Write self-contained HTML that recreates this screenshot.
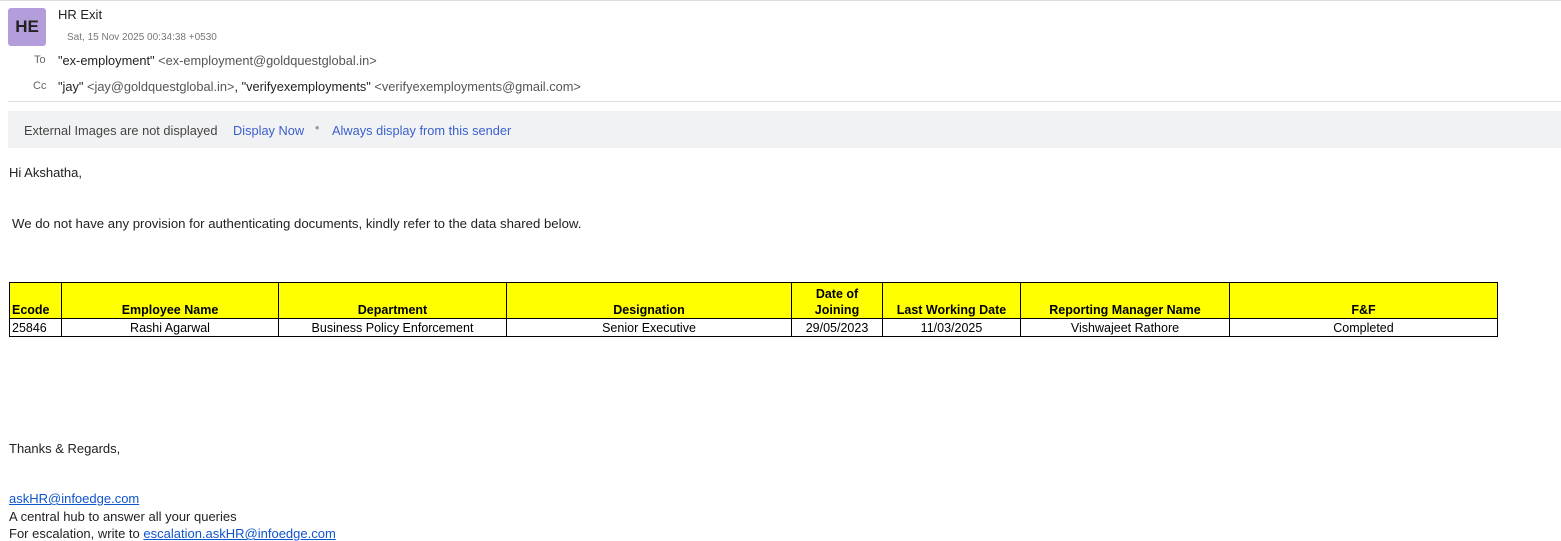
<!DOCTYPE html>
<html><head><meta charset="utf-8"><style>
body{margin:0;width:1561px;height:541px;background:#fff;font-family:"Liberation Sans",sans-serif;position:relative;overflow:hidden;color:#222}
.a{position:absolute;white-space:nowrap}
.g{color:#555}
a{color:#1155cc;text-decoration:underline}
table{position:absolute;left:9px;top:282px;border-collapse:collapse;font-size:12.5px;font-family:"Liberation Sans Narrow","Liberation Sans",sans-serif;color:#000}
td{border:1px solid #000;text-align:center;padding:0 2px;line-height:16px}
tr.h td{background:#ffff00;font-weight:bold;height:35px;vertical-align:bottom}
tr.r td{height:17px}
</style></head><body>
<div style="position:absolute;left:0;top:0;width:1561px;height:1px;background:#ddd"></div>
<div class="a" style="left:8px;top:8px;width:38px;height:38px;background:#b39ddb;border-radius:3px;font-size:17px;font-weight:bold;line-height:38px;text-align:center;color:#222">HE</div>
<div class="a" style="left:58px;top:7px;font-size:13px;color:#222">HR Exit</div>
<div class="a" style="left:67px;top:32px;font-size:10px;color:#777">Sat, 15 Nov 2025 00:34:38 +0530</div>
<div class="a" style="left:34px;top:54px;font-size:11px;color:#666">To</div>
<div class="a" style="left:58px;top:53px;font-size:12.8px;color:#222">"ex-employment" <span class="g">&lt;ex-employment@goldquestglobal.in&gt;</span></div>
<div class="a" style="left:33px;top:80px;font-size:11px;color:#666">Cc</div>
<div class="a" style="left:58px;top:79px;font-size:12.8px;color:#222">"jay" <span class="g">&lt;jay@goldquestglobal.in&gt;</span>, "verifyexemployments" <span class="g">&lt;verifyexemployments@gmail.com&gt;</span></div>
<div style="position:absolute;left:8px;top:101px;width:1553px;height:1px;background:#ddd"></div>
<div style="position:absolute;left:8px;top:111px;width:1553px;height:37px;background:#f1f2f4"></div>
<div class="a" style="left:24px;top:123px;font-size:12.8px;color:#444">External Images are not displayed</div>
<div class="a" style="left:233px;top:123px;font-size:12.8px;color:#3a5fcd">Display Now</div>
<div class="a" style="left:315px;top:121px;font-size:12.5px;color:#999">•</div>
<div class="a" style="left:332px;top:123px;font-size:12.8px;color:#3a5fcd">Always display from this sender</div>
<div class="a" style="left:9px;top:165px;font-size:13px">Hi Akshatha,</div>
<div class="a" style="left:12px;top:216px;font-size:13.2px">We do not have any provision for authenticating documents, kindly refer to the data shared below.</div>
<table>
<colgroup><col style="width:52px"><col style="width:217px"><col style="width:228px"><col style="width:285px"><col style="width:91px"><col style="width:138px"><col style="width:209px"><col style="width:268px"></colgroup>
<tr class="h"><td style="text-align:left">Ecode</td><td>Employee Name</td><td>Department</td><td>Designation</td><td>Date of<br>Joining</td><td>Last Working Date</td><td>Reporting Manager Name</td><td>F&amp;F</td></tr>
<tr class="r"><td style="text-align:left">25846</td><td>Rashi Agarwal</td><td>Business Policy Enforcement</td><td>Senior Executive</td><td>29/05/2023</td><td>11/03/2025</td><td>Vishwajeet Rathore</td><td>Completed</td></tr>
</table>
<div class="a" style="left:9px;top:441px;font-size:13px">Thanks &amp; Regards,</div>
<div class="a" style="left:9px;top:491px;font-size:13px"><a>askHR@infoedge.com</a></div>
<div class="a" style="left:9px;top:509px;font-size:13px">A central hub to answer all your queries</div>
<div class="a" style="left:9px;top:526px;font-size:13px">For escalation, write to <a>escalation.askHR@infoedge.com</a></div>
</body></html>
